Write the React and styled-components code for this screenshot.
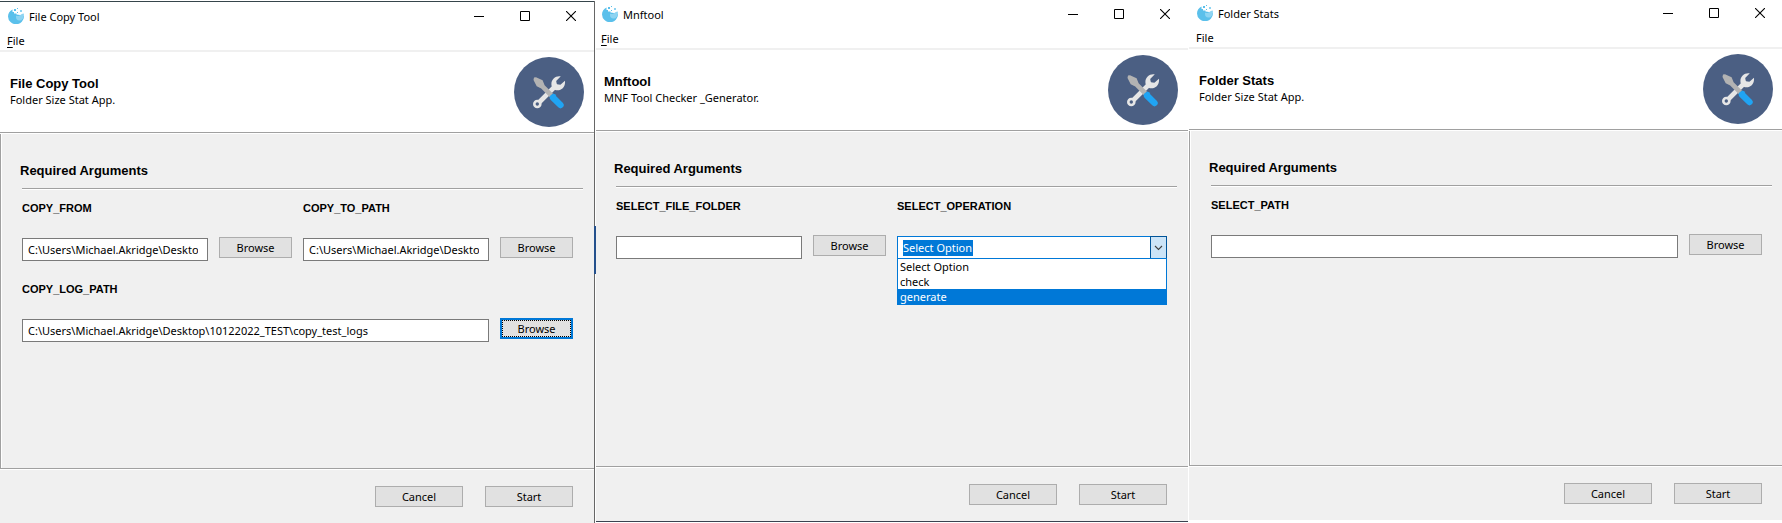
import React from 'react';
import styled, { createGlobalStyle, css } from 'styled-components';

const GlobalStyle = createGlobalStyle`
  * { box-sizing: border-box; }
  body {
    margin: 0;
    background: #fff;
    color: #000;
    font: 11px/16px "Noto Sans", sans-serif;
  }
  button, input, select { font: inherit; color: inherit; margin: 0; }
`;

const Desktop = styled.main`
  display: grid;
  grid-template-columns: repeat(3, minmax(0, 1fr));
  min-height: 100vh;
  overflow: hidden;
`;

const placements = {
  first: css`
    padding-top: 1px;
    &::before { content: ''; height: 1px; background: #36454b; }
  `,
  second: css`
    margin-bottom: 1px;
    border-bottom: 1px solid #3b4250;
    &::before {
      content: '';
      position: absolute;
      inset: 1px auto -2px 0;
      width: 2px;
      background:
        linear-gradient(#24508c, #24508c) 0 225px / 2px 48px no-repeat,
        linear-gradient(90deg, #666 50%, #fff 50%);
    }
  `,
  third: css`
    margin: -1px -1px 3px 1px;
  `,
};

const Window = styled.section`
  position: relative;
  display: flex;
  flex-direction: column;
  background: #fff;
  ${(p) => placements[p.$placement]}
`;

const TitleBar = styled.header`
  display: flex;
  align-items: flex-start;
  height: 30px;
  padding-left: 8px;
`;

const AppIcon = styled.svg`
  width: 16px;
  height: 16px;
  margin-top: 6px;
`;

const WindowTitle = styled.h1`
  flex: 1;
  margin: 0 0 0 5px;
  font-size: 11px;
  line-height: 30px;
  font-weight: 400;
`;

const WindowControl = styled.button`
  width: 46px;
  height: 28px;
  padding: 0;
  border: 0;
  background: none;
  svg { display: block; margin: 0 auto; }
`;

const MenuBar = styled.nav`
  display: flex;
  height: 20px;
  padding-left: 7px;
  border-bottom: 2px solid #f0f0f0;
`;

const MenuItem = styled.button`
  padding: 0;
  border: 0;
  background: none;
  line-height: 18px;
  u { text-underline-offset: 2px; }
`;

const Banner = styled.div`
  display: flex;
  align-items: center;
  justify-content: space-between;
  height: 80px;
  padding: 0 10px;
`;

const Heading = styled.h2`
  margin: 0;
  font: bold 13px/16px "Liberation Sans", sans-serif;
`;

const Subtitle = styled.p`
  margin: 0;
`;

const ToolBadge = styled.svg`
  width: 70px;
  height: 70px;
`;

const Rule = styled.hr`
  flex: none;
  width: 100%;
  height: 2px;
  margin: 0;
  border: 0;
  border-top: 1px solid #a0a0a0;
  border-bottom: 1px solid #fff;
`;

const Body = styled.form`
  flex: 1;
  padding: 29px 11px 0 18px;
  background: #f0f0f0;
  border-left: 1px solid #a0a0a0;
  box-shadow: inset 1px 0 #fff;
`;

const SectionHeading = styled(Heading)`
  padding-left: 1px;
`;

const SectionRule = styled(Rule)`
  width: auto;
  margin: 9px 0 10px 3px;
`;

const Fields = styled.div`
  display: grid;
  grid-template-columns: 1fr 1fr;
  gap: 20px 11px;
  padding: 0 10px 0 3px;
`;

const Field = styled.div`
  min-width: 0;
  grid-column: ${(p) => (p.$wide ? '1 / -1' : 'auto')};
`;

const FieldLabel = styled.label`
  display: block;
  margin-bottom: 21px;
  font: bold 11px/16px "Liberation Sans", sans-serif;
`;

const FieldRow = styled.div`
  display: flex;
  align-items: flex-start;
  gap: 11px;
  height: 24px;
`;

const TextBox = styled.input`
  flex: 1;
  min-width: 0;
  height: 23px;
  margin-top: 1px;
  padding: 0 9px 0 5px;
  border: 1px solid #7a7a7a;
  border-radius: 0;
  background: #fff;
  outline: 0;
`;

const PushButton = styled.button`
  width: ${(p) => (p.$large ? 88 : 73)}px;
  height: 21px;
  padding: 0;
  border: ${(p) => (p.$active ? '2px solid #0078d7' : '1px solid #adadad')};
  border-radius: 0;
  background: #e1e1e1;
  line-height: 16px;
  outline: ${(p) => (p.$active ? '1px dotted #000' : '0')};
  outline-offset: -3px;
`;

const Combo = styled.div`
  position: relative;
  display: flex;
  flex: 1;
  align-items: center;
  height: 23px;
  margin-top: 1px;
  padding-left: 5px;
  background: #fff;
  border: 1px solid #0078d7;
`;

const ComboValue = styled.select`
  appearance: none;
  height: 16px;
  padding: 0;
  border: 0;
  border-radius: 0;
  background: #0078d7;
  color: #fff;
  line-height: 16px;
  outline: 0;
`;

const ComboArrow = styled.button`
  display: grid;
  place-items: center;
  width: 17px;
  height: 23px;
  margin: -1px -1px -1px auto;
  padding: 0;
  border: 1px solid #005499;
  background: #cce4f7;
`;

const ComboList = styled.ul`
  position: absolute;
  top: 100%;
  left: -1px;
  right: -1px;
  margin: 0;
  padding: 0;
  list-style: none;
  background: #fff;
  border: 1px solid #0078d7;
`;

const ComboOption = styled.li`
  height: 15px;
  padding-left: 2px;
  line-height: 15px;
  background: ${(p) => (p.$active ? '#0078d7' : '#fff')};
  color: ${(p) => (p.$active ? '#fff' : '#000')};
`;

const Footer = styled.footer`
  background: #f0f0f0;
`;

const Actions = styled.div`
  display: flex;
  justify-content: flex-end;
  gap: 22px;
  padding: 16px 21px;
`;

function Splash() {
  return (
    <AppIcon viewBox="0 0 16 16" aria-hidden="true">
      <path fill="#5bc0eb" d="M4.500 1.500V4H6v1.500h2.500v1L12 7l4 1a8 8 0 0 1-16 .5C0 5.500 1.800 2.700 4.500 1.500Z" />
      <path fill="#8ed4f2" d="M15.800 5.500c.5 3-.6 7-4.600 7-2 0-3.200-1.500-3.200-3.500V7.500c1 .8 2.400.7 3.500 0S14 5.500 15.800 5.500Z" />
      <path fill="#5bc0eb" d="M6 1h2v2H6zM9 0h1v1H9zM9 4h1v1H9z" />
      <path fill="#8ed4f2" d="M12 2h2v2h-2z" />
    </AppIcon>
  );
}

function Tools() {
  return (
    <ToolBadge viewBox="0 0 70 70" aria-hidden="true">
      <circle cx="35" cy="35" r="35" fill="#4b5f83" />
      <path d="M25.500 45 43 27.500" stroke="#e6e6e6" strokeWidth="4.600" />
      <circle cx="23.300" cy="47" r="3" fill="none" stroke="#e6e6e6" strokeWidth="2.600" />
      <path fill="#e6e6e6" d="M46.800 19.300C42 18.300 37.300 22 37.400 27c0 1.500.3 2.500 1 3.500l2 2c1.500.8 3 1 4.600.7 4-.6 6.500-4.500 6-9.400l-4.600 4-3.600-.6-.6-3.300Z" />
      <path fill="#b3b3b3" d="m20 20.600 2-.4 6.600 3 2 5 8.300 8.300-3.300 3.400-8.400-8.500-4.500-2.200-3.200-6.200Z" />
      <path d="M39 40.600 46.500 48" stroke="#20a4f3" strokeWidth="6.400" strokeLinecap="round" />
      <path fill="#20a4f3" d="m35.800 40 3.600-3.600 3 1.600-5 5Z" />
    </ToolBadge>
  );
}

function Controls() {
  return (
    <>
      <WindowControl aria-label="Minimize">
        <svg width="10" height="10"><path d="M0 5.500h10" stroke="#000" /></svg>
      </WindowControl>
      <WindowControl aria-label="Maximize">
        <svg width="10" height="10"><path d="M.5.5h9v9h-9z" fill="none" stroke="#000" /></svg>
      </WindowControl>
      <WindowControl aria-label="Close">
        <svg width="10" height="10"><path d="m0 0 10 10M10 0 0 10" stroke="#000" strokeWidth="1.100" /></svg>
      </WindowControl>
    </>
  );
}

function PathField({ id, label, value = '', wide, focused }) {
  return (
    <Field $wide={wide}>
      <FieldLabel htmlFor={id}>{label}</FieldLabel>
      <FieldRow>
        <TextBox id={id} type="text" defaultValue={value} />
        <PushButton type="button" $active={focused}>Browse</PushButton>
      </FieldRow>
    </Field>
  );
}

function ChoiceField({ id, label, options, highlighted }) {
  return (
    <Field>
      <FieldLabel htmlFor={id}>{label}</FieldLabel>
      <FieldRow>
        <Combo>
          <ComboValue id={id} defaultValue={options[0]}>
            {options.map((o) => <option key={o}>{o}</option>)}
          </ComboValue>
          <ComboArrow type="button" aria-label="Toggle options">
            <svg width="9" height="6"><path d="m1 1 3.500 3.500L8 1" fill="none" stroke="#404040" strokeWidth="1.100" /></svg>
          </ComboArrow>
          <ComboList role="listbox">
            {options.map((o) => (
              <ComboOption key={o} role="option" aria-selected={o === highlighted} $active={o === highlighted}>
                {o}
              </ComboOption>
            ))}
          </ComboList>
        </Combo>
      </FieldRow>
    </Field>
  );
}

function ToolWindow({ placement, title, subtitle, mnemonic, children }) {
  return (
    <Window $placement={placement}>
      <TitleBar>
        <Splash />
        <WindowTitle>{title}</WindowTitle>
        <Controls />
      </TitleBar>
      <MenuBar>
        <MenuItem>{mnemonic ? <><u>F</u>ile</> : 'File'}</MenuItem>
      </MenuBar>
      <Banner>
        <div>
          <Heading>{title}</Heading>
          <Subtitle>{subtitle}</Subtitle>
        </div>
        <Tools />
      </Banner>
      <Rule />
      <Body>
        <SectionHeading as="h3">Required Arguments</SectionHeading>
        <SectionRule />
        <Fields>{children}</Fields>
      </Body>
      <Footer>
        <Rule />
        <Actions>
          <PushButton type="button" $large>Cancel</PushButton>
          <PushButton type="button" $large>Start</PushButton>
        </Actions>
      </Footer>
    </Window>
  );
}

const desktopPath = 'C:\\Users\\Michael.Akridge\\Desktop\\10122022_TEST';

export default function App() {
  return (
    <>
      <GlobalStyle />
      <Desktop>
        <ToolWindow placement="first" title="File Copy Tool" subtitle="Folder Size Stat App." mnemonic>
          <PathField id="copy-from" label="COPY_FROM" value={desktopPath} />
          <PathField id="copy-to" label="COPY_TO_PATH" value={desktopPath} />
          <PathField id="copy-log" label="COPY_LOG_PATH" value={`${desktopPath}\\copy_test_logs`} wide focused />
        </ToolWindow>
        <ToolWindow placement="second" title="Mnftool" subtitle="MNF Tool Checker _Generator." mnemonic>
          <PathField id="file-folder" label="SELECT_FILE_FOLDER" />
          <ChoiceField
            id="operation"
            label="SELECT_OPERATION"
            options={['Select Option', 'check', 'generate']}
            highlighted="generate"
          />
        </ToolWindow>
        <ToolWindow placement="third" title="Folder Stats" subtitle="Folder Size Stat App.">
          <PathField id="select-path" label="SELECT_PATH" wide />
        </ToolWindow>
      </Desktop>
    </>
  );
}
